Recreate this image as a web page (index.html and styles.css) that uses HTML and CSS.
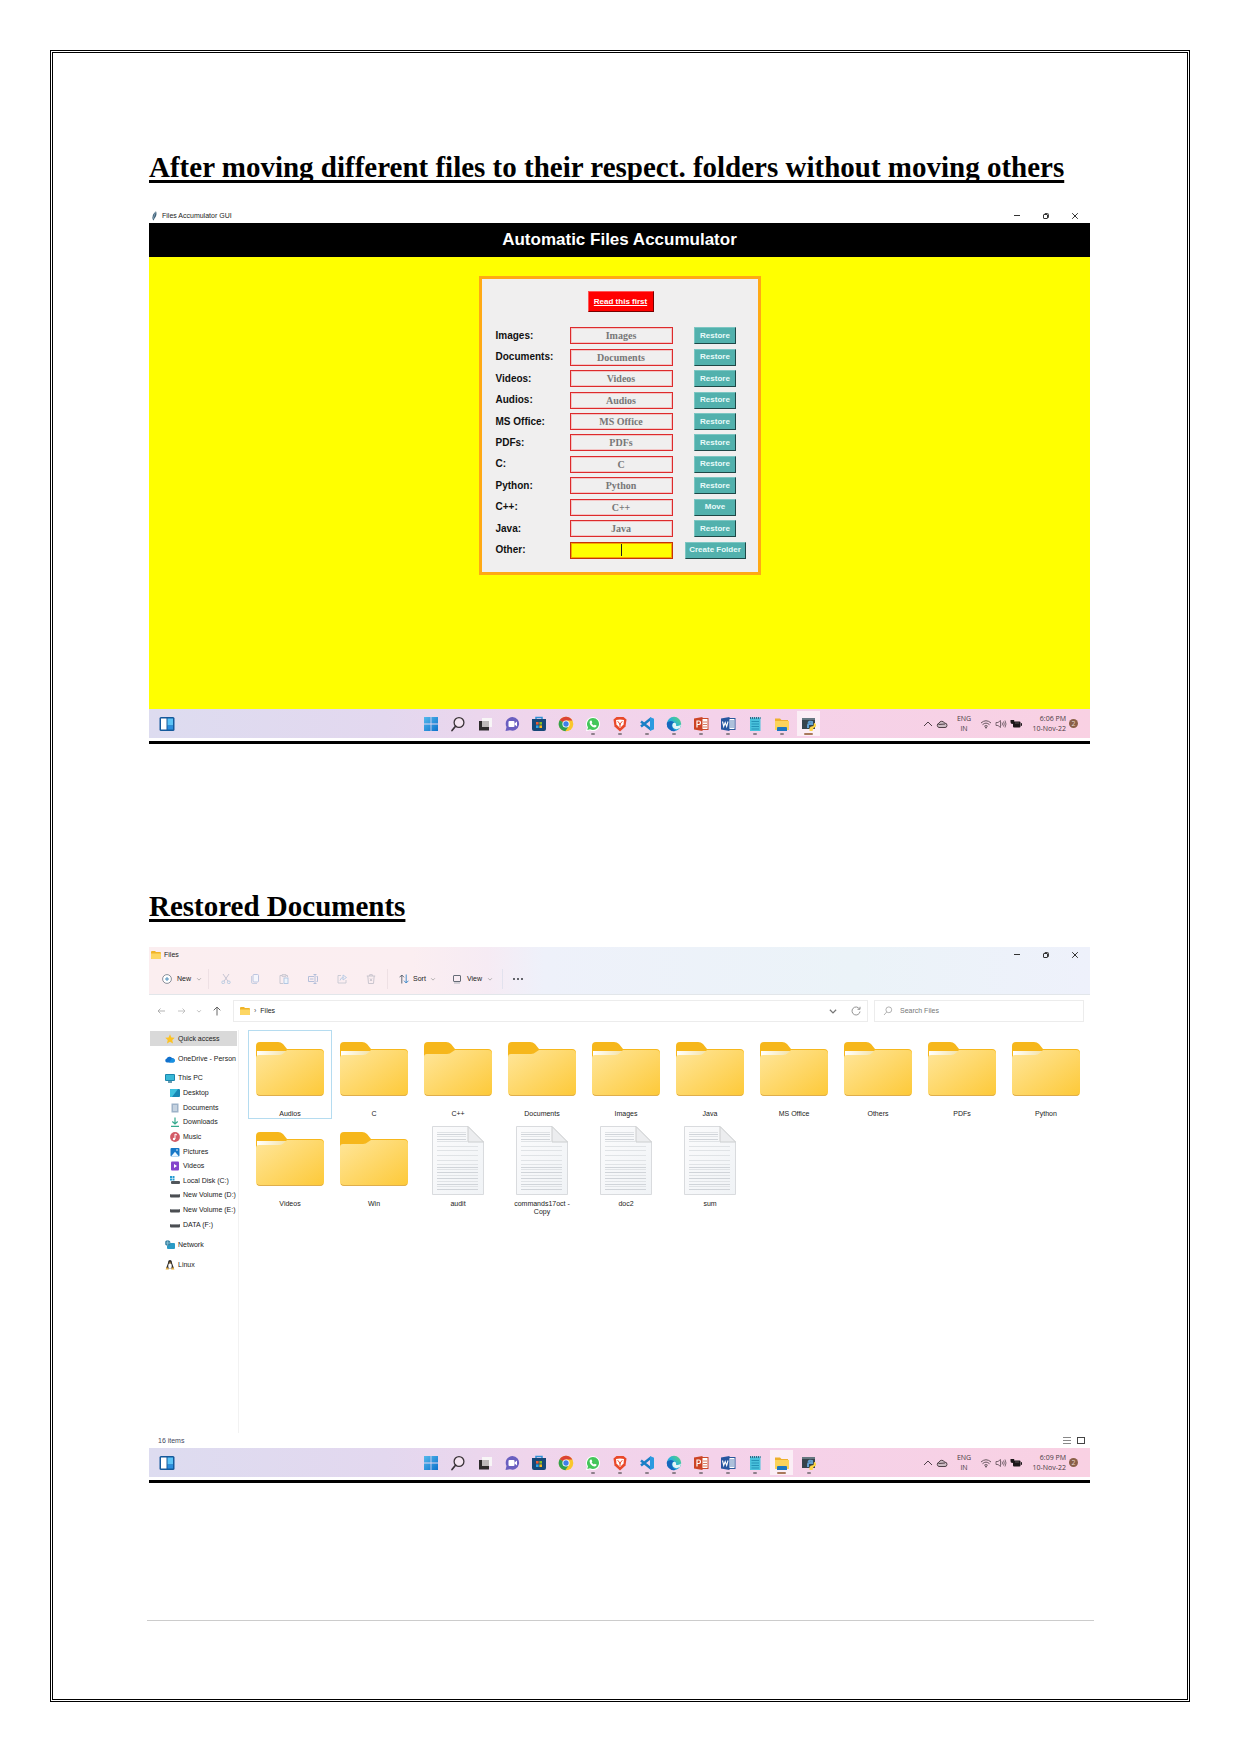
FILE: index.html
```html
<!DOCTYPE html>
<html lang="en">
<head>
<meta charset="utf-8">
<title>Files Accumulator</title>
<link rel="stylesheet" href="styles.css">
</head>
<body>
<svg class="defs" aria-hidden="true">
  <defs>
    <linearGradient id="gFolder" x1="0" y1="0" x2="1" y2="1"><stop offset="0" stop-color="#ffe69a"/><stop offset="1" stop-color="#fdc938"/></linearGradient>
    <linearGradient id="gPaper" x1="0" y1="0" x2="1" y2="0"><stop offset="0" stop-color="#fff"/><stop offset="1" stop-color="#f3e2a6"/></linearGradient>
    <linearGradient id="gWin" x1="0" y1="0" x2="1" y2="1"><stop offset="0" stop-color="#55b9ec"/><stop offset="1" stop-color="#0c72cc"/></linearGradient>
    <linearGradient id="gEdge" x1="0" y1="1" x2="1" y2="0"><stop offset="0" stop-color="#1377d2"/><stop offset=".5" stop-color="#28b1d8"/><stop offset="1" stop-color="#5fd870"/></linearGradient>
    <linearGradient id="gDoc" x1="0" y1="0" x2="1" y2="1"><stop offset="0" stop-color="#fbfbfc"/><stop offset="1" stop-color="#f0f3f6"/></linearGradient>
  </defs>
  <symbol id="folder-full" viewBox="0 0 68 54"><path d="M0 4Q0 0 4 0H22Q25 0 27 2L31 7H64Q68 7 68 11V30H0Z" fill="#f6b71c"/><path d="M1 9H31L28 14H1Z" fill="url(#gPaper)"/><path d="M0 16Q0 13 3 13H23Q26 13 28 11L31 8H64Q68 8 68 12V50Q68 54 64 54H4Q0 54 0 50Z" fill="url(#gFolder)"/><path d="M1 52Q2 53.500 4 53.500H64Q66 53.500 67 52" fill="none" stroke="#dfae4c"/></symbol>
  <symbol id="folder-empty" viewBox="0 0 68 54"><path d="M0 4Q0 0 4 0H22Q25 0 27 2L31 7H64Q68 7 68 11V30H0Z" fill="#f6b71c"/><path d="M0 15Q0 12 3 12H23Q26 12 28 10L31 8H64Q68 8 68 12V50Q68 54 64 54H4Q0 54 0 50Z" fill="url(#gFolder)"/><path d="M1 52Q2 53.500 4 53.500H64Q66 53.500 67 52" fill="none" stroke="#dfae4c"/></symbol>
  <symbol id="textfile" viewBox="0 0 52 69"><path d="M.5.5H36L51.500 16V68.500H.5Z" fill="url(#gDoc)" stroke="#d9dbde"/><path d="M5 6.500H34M5 10.500H34M5 15.500H35M5 20.500H46M5 24.500H46M5 29.500H46M5 34.500H46M5 38.500H46M5 43.500H46M5 49.500H46M5 55.500H46M5 60.500H46" stroke="#e0e3e6"/><path d="M5 8.500H34M5 13.500H34M5 41.500H46M5 46.500H46M5 52.500H46M5 58.500H46M5 63.500H46" stroke="#d0d4d9"/><path d="M36 .5V16H51.500Z" fill="#ecedef" stroke="#cccecf"/></symbol>
  <symbol id="folder-small" viewBox="0 0 10 8"><path d="M0 1Q0 0 1 0H4L5 1H9Q10 1 10 2V7Q10 8 9 8H1Q0 8 0 7Z" fill="#f0b429"/><path d="M0 2.500H10V7Q10 8 9 8H1Q0 8 0 7Z" fill="#fdd663"/></symbol>

  <symbol id="widgets" viewBox="0 0 16 16"><rect x=".5" y="1" width="15" height="14" rx="1.500" fill="#14599b"/><rect x="2" y="2.500" width="5.500" height="11" fill="#fff"/><rect x="8.500" y="2.500" width="5.500" height="7" fill="#5cc3f6"/><rect x="8.500" y="9.500" width="5.500" height="4" fill="#2b8ede"/></symbol>
  <symbol id="start" viewBox="0 0 16 16"><path d="M1 1H7.600V7.600H1ZM8.400 1H15V7.600H8.400ZM1 8.400H7.600V15H1ZM8.400 8.400H15V15H8.400Z" fill="url(#gWin)"/></symbol>
  <symbol id="search" viewBox="0 0 16 16"><circle cx="9" cy="6.500" r="4.900" fill="#f4e4f1" stroke="#3a3338" stroke-width="1.300"/><path d="M5.500 10.200 2 14.500" stroke="#3a3338" stroke-width="1.700" stroke-linecap="round"/></symbol>
  <symbol id="taskview" viewBox="0 0 16 16"><path d="M5 2H15V11H5Z" fill="#f8f6f7"/><path d="M2 5H12V14.500H2Z" fill="#2d2b2c"/><path d="M5 5H12V11H5Z" fill="#bdb9ba"/></symbol>
  <symbol id="chat" viewBox="0 0 16 16"><path d="M8.500 1A6.800 6.800 0 1 1 6 14.200L1.500 15 2.500 11A6.800 6.800 0 0 1 8.500 1Z" fill="#6a5fc0"/><rect x="4.500" y="5" width="6" height="6" rx="1" fill="#fff"/><path d="M10.500 7.500 13 5.500V10.500L10.500 8.500Z" fill="#fff"/></symbol>
  <symbol id="store" viewBox="0 0 16 16"><path d="M5 4V1.500H11V4" fill="none" stroke="#2f90d5" stroke-width="1.500"/><path d="M1 3H15V13Q15 15 13 15H3Q1 15 1 13Z" fill="#174878"/><path d="M5 6H7.600V8.600H5Z" fill="#ef5b34"/><path d="M8.400 6H11V8.600H8.400Z" fill="#86be29"/><path d="M5 9.400H7.600V12H5Z" fill="#2aa5e8"/><path d="M8.400 9.400H11V12H8.400Z" fill="#fdbc1a"/></symbol>
  <symbol id="chrome" viewBox="0 0 16 16"><circle cx="8" cy="8" r="7.300" fill="#fac62b"/><path d="M8 8 1.700 4.300A7.300 7.300 0 0 1 14.300 4.500H8Z" fill="#dc4335"/><path d="M8 8 1.700 4.300A7.300 7.300 0 0 0 7.300 15.300L11 9.800Z" fill="#2ea052"/><circle cx="8" cy="8" r="3.600" fill="#fff"/><circle cx="8" cy="8" r="2.700" fill="#3f7fe8"/></symbol>
  <symbol id="whatsapp" viewBox="0 0 16 16"><path d="M8 1A7 7 0 1 1 4.800 14.200L1 15.200 2 11.600A7 7 0 0 1 8 1Z" fill="#fff"/><path d="M8 2A6 6 0 1 1 5 13.200L2.300 14 3 11.300A6 6 0 0 1 8 2Z" fill="#44c65a"/><path d="M5.200 4.700 6.500 4.500 7.300 6.500 6.600 7.300Q7.300 8.800 8.900 9.500L9.700 8.700 11.600 9.600Q11.600 11.600 9.600 11.600 5.200 10.700 4.600 6.500 4.500 5.300 5.200 4.700Z" fill="#fff"/></symbol>
  <symbol id="brave" viewBox="0 0 16 16"><path d="M4.500 1H11.500L14.500 3.500 13.500 10.500 8 15.500 2.500 10.500 1.500 3.500Z" fill="#e9492a"/><path d="M4 4 8 3.500 12 4 11.500 8.500 8 12 4.500 8.500Z" fill="#fff"/><path d="M5.500 5.500 7 6.500 8 9 9 6.500 10.500 5.500M8 9V11" stroke="#e9492a" fill="none"/></symbol>
  <symbol id="vscode" viewBox="0 0 16 16"><path d="M12 2.500 2 10.500M12 13.500 2 5.500" stroke="#1a7fc6" stroke-width="2.500"/><path d="M11 1 15 2.700V13.300L11 15Z" fill="#2c9ae0"/></symbol>
  <symbol id="edge" viewBox="0 0 16 16"><circle cx="8" cy="8" r="7.200" fill="url(#gEdge)"/><path d="M15 8.500Q13 10.500 10 9.700 10.800 7.500 8.800 6.800 6.500 6.600 6.300 9.200 6.500 12.700 10.500 13.300L14 12Z" fill="#e5f5f6"/><path d="M1 6.500Q5 3.500 8.500 6.500 6 6.500 5.800 9.500 6 13 9.500 14.800L8 15.200A7.200 7.200 0 0 1 1 6.500Z" fill="#1668bd"/></symbol>
  <symbol id="powerpoint" viewBox="0 0 16 16"><rect x="8" y="2.500" width="7" height="11" fill="#fff" stroke="#c9492b"/><path d="M10 6H14M10 8.500H14M10 11H14" stroke="#d77a61"/><path d="M1 2.500 9.500 1V15L1 13.500Z" fill="#cd4425"/><path d="M4 11.500V5H6Q7.500 5 7.500 6.700T6 8.500H4" fill="none" stroke="#fff" stroke-width="1.200"/></symbol>
  <symbol id="word" viewBox="0 0 16 16"><rect x="8" y="2.500" width="7" height="11" fill="#fff" stroke="#2a579a"/><path d="M10 5H14M10 7H14M10 9H14M10 11H14" stroke="#5d81b6"/><path d="M1 2.500 9.500 1V15L1 13.500Z" fill="#2756a0"/><path d="M2.500 5.500 3.700 10.500 5.200 6.500 6.700 10.500 8 5.500" fill="none" stroke="#fff" stroke-width="1.100"/></symbol>
  <symbol id="notepad" viewBox="0 0 16 16"><rect x="3" y="1.500" width="10.500" height="13.500" fill="#49c1dc"/><path d="M3 2H13.500" stroke="#346985" stroke-width="1.800" stroke-dasharray="1 1"/><path d="M4.500 5.500H12M4.500 8H12M4.500 10.500H12M4.500 13H12" stroke="#2493b7"/></symbol>
  <symbol id="explorer" viewBox="0 0 16 16"><path d="M1 2.500H6L7.500 4H14V13H1Z" fill="#edb02c"/><path d="M1 5H15V14H1Z" fill="#fbd35a"/><path d="M4 11H12Q13 11 13 12V15H3V12Q3 11 4 11Z" fill="#1c77c0"/></symbol>
  <symbol id="python" viewBox="0 0 16 16"><path d="M1 2H14V13H1Z" fill="#36444c"/><path d="M1 2H14V4H1Z" fill="#657780"/><path d="M7 12V9Q7 8 8 8H11V6Q8 5 7.500 7" fill="none" stroke="#62a0d1" stroke-width="2"/><path d="M13 7Q15.500 7 15 10.500L12.500 12 11.500 15H8.500V12Q9 10.500 12.500 10Z" fill="#ffd646"/></symbol>

  <symbol id="chev-up" viewBox="0 0 10 10"><path d="M1 7 5 3 9 7" fill="none" stroke="#4f4048"/></symbol>
  <symbol id="cloud" viewBox="0 0 12 10"><path d="M3 8.500A2.200 2.200 0 0 1 3 4.200 3 3 0 0 1 8.500 4Q11.300 4.200 11 6.500T9 8.500Z" fill="#cdbcc4" stroke="#514048"/><path d="M2.500 5.500 9 5" stroke="#514048"/></symbol>
  <symbol id="wifi" viewBox="0 0 12 10"><path d="M1 4Q6-.5 11 4M2.500 5.700Q6 2.500 9.500 5.700M4.200 7.300Q6 5.700 7.800 7.300" fill="none" stroke="#66565e"/><circle cx="6" cy="8.500" r="1" fill="#66565e"/></symbol>
  <symbol id="sound" viewBox="0 0 12 10"><path d="M1 3.500H3L5.500 1.500V8.500L3 6.500H1ZM7 3.500Q8 5 7 6.500M8.500 2.500Q10 5 8.500 7.500M10 1.500Q12 5 10 8.500" fill="none" stroke="#604f58" stroke-width=".8"/></symbol>
  <symbol id="battery" viewBox="0 0 12 10"><rect x="3" y="2.500" width="7.500" height="6" rx="1" fill="#1c1719"/><rect x="10.800" y="4.200" width="1.200" height="2.600" fill="#1c1719"/><path d="M.5 1V3Q.5 5 2.300 5T4.200 3V1Z" fill="#1c1719"/><path d="M5 4H9" stroke="#85787e" stroke-width=".6"/></symbol>

  <symbol id="minimise" viewBox="0 0 8 8"><path d="M1 3.500H7" stroke="#333"/></symbol>
  <symbol id="restore" viewBox="0 0 8 8"><path d="M3 2.500V1.500H5.500Q6.500 1.500 6.500 2.500V5.500H5.500" fill="none" stroke="#444"/><rect x="1.500" y="2.500" width="4" height="4" rx=".5" fill="none" stroke="#333"/></symbol>
  <symbol id="close" viewBox="0 0 8 8"><path d="M1.200 1.200 6.800 6.800M6.800 1.200 1.200 6.800" stroke="#333"/></symbol>
  <symbol id="feather" viewBox="0 0 8 10"><path d="M2 9Q0 4 5 .3 6.500 4 3.500 7.500L2.500 9.500Z" fill="#3e6078"/><path d="M4.500 1 2 8" stroke="#9bb4c4" stroke-width=".7"/></symbol>

  <symbol id="new" viewBox="0 0 10 10"><circle cx="5" cy="5" r="4.400" fill="#fff" stroke="#6d7683" stroke-width=".8"/><path d="M5 3V7M3 5H7" stroke="#3f86b8" stroke-width=".9"/></symbol>
  <symbol id="chev-down" viewBox="0 0 8 8"><path d="M1.500 3 4 5.500 6.500 3" fill="none" stroke="currentColor"/></symbol>
  <symbol id="cut" viewBox="0 0 10 10"><path d="M2 0 7 7.300M8 0 3 7.300" stroke="#bfc0cf" stroke-width=".9"/><circle cx="2.200" cy="8.300" r="1.400" fill="none" stroke="#b3c8e0" stroke-width=".9"/><circle cx="7.800" cy="8.300" r="1.400" fill="none" stroke="#b3c8e0" stroke-width=".9"/></symbol>
  <symbol id="copy" viewBox="0 0 10 10"><rect x="3" y=".5" width="5.500" height="7.500" rx="1" fill="#f6f6fc" stroke="#b5bfdc" stroke-width=".9"/><path d="M1.500 2V8Q1.500 9.500 3 9.500H7" fill="none" stroke="#c2cbe0" stroke-width=".9"/></symbol>
  <symbol id="paste" viewBox="0 0 10 10"><path d="M3 1.500H1V9.500H4M7 1.500H8.500V3M3 .7H7V2.300H3Z" fill="none" stroke="#c3c2cd" stroke-width=".9"/><rect x="5" y="4" width="4" height="5.500" fill="#eef4fb" stroke="#adc4e0" stroke-width=".9"/></symbol>
  <symbol id="rename" viewBox="0 0 10 10"><path d="M6 2.500H.5V7.500H6M8.500 2.500H9.500V7.500H8.500M2 5H5.500" fill="none" stroke="#adb9d7" stroke-width=".9"/><path d="M5.500.5H8.500M7 .5V9.500M5.500 9.500H8.500" stroke="#adb9d7" stroke-width=".9"/></symbol>
  <symbol id="share" viewBox="0 0 10 10"><path d="M4 1.500H1V9H9V6" fill="none" stroke="#c6c7d3" stroke-width=".9"/><path d="M3 6.500Q3.500 3.500 6.500 3.500M6 1 9.500 3.500 6 6Z" fill="none" stroke="#b3c8e4" stroke-width=".9"/></symbol>
  <symbol id="trash" viewBox="0 0 10 10"><path d="M.8 2H9.200M3.700 2V.7H6.300V2M1.800 2 2.500 9.500H7.500L8.200 2M4 4.500 6 7M6 4.500 4 7" fill="none" stroke="#c4c1cb" stroke-width=".9"/></symbol>
  <symbol id="sort" viewBox="0 0 10 10"><path d="M2.800 9.500V1M.5 3.300 2.800 1 5 3.300" fill="none" stroke="#555e6a" stroke-width=".9"/><path d="M7.200.5V9M5 6.700 7.200 9 9.500 6.700" fill="none" stroke="#3785c6" stroke-width=".9"/></symbol>
  <symbol id="view" viewBox="0 0 10 10"><rect x="1.500" y="1.500" width="7" height="6" rx=".5" fill="none" stroke="#666c77"/><path d="M2 9H8" stroke="#b0b3bb"/></symbol>
  <symbol id="dots" viewBox="0 0 12 4"><circle cx="2" cy="2" r="1" fill="#33363d"/><circle cx="6" cy="2" r="1" fill="#33363d"/><circle cx="10" cy="2" r="1" fill="#33363d"/></symbol>
  <symbol id="left" viewBox="0 0 10 10"><path d="M9 5H2M4.500 2.500 2 5 4.500 7.500" fill="none" stroke="#aaa" stroke-width=".9"/></symbol>
  <symbol id="right" viewBox="0 0 10 10"><path d="M1 5H8M5.500 2.500 8 5 5.500 7.500" fill="none" stroke="#bbb" stroke-width=".9"/></symbol>
  <symbol id="up" viewBox="0 0 10 10"><path d="M5 9.500V1M1.700 4.300 5 1 8.300 4.300" fill="none" stroke="#666"/></symbol>
  <symbol id="reload" viewBox="0 0 10 10"><path d="M8.500 3A4 4 0 1 0 9 5.500M9 .8V3.300H6.500" fill="none" stroke="#888" stroke-width=".9"/></symbol>
  <symbol id="glass" viewBox="0 0 10 10"><circle cx="5.800" cy="3.800" r="2.900" fill="none" stroke="#aaa" stroke-width=".9"/><path d="M3.700 6 1 9" stroke="#aaa" stroke-width=".9"/></symbol>

  <symbol id="star" viewBox="0 0 10 10"><path d="M5 .3 6.400 3.400 9.800 3.700 7.300 6 8 9.500 5 7.700 2 9.500 2.700 6 .2 3.700 3.600 3.400Z" fill="#fcc224"/></symbol>
  <symbol id="onedrive" viewBox="0 0 10 10"><path d="M2 8.500A2 2 0 0 1 1.700 4.600 3 3 0 0 1 7 4Q9.800 4.300 9.800 6.500T8 8.500Z" fill="#1271cc"/><path d="M4 8.500 7 4.500Q9.800 4.500 9.800 6.500T8 8.500Z" fill="#1791e2"/></symbol>
  <symbol id="pc" viewBox="0 0 10 10"><rect x="0" y="1" width="10" height="7" rx="1" fill="#1b86ae"/><rect x="1" y="2" width="8" height="5" fill="#39b8d6"/><path d="M3 9H7" stroke="#377c98" stroke-width="1.500"/></symbol>
  <symbol id="desktop" viewBox="0 0 10 10"><rect y="1" width="10" height="8" rx="1" fill="#1787b4"/><path d="M0 2Q0 1 1 1H8L2 9H1Q0 9 0 8Z" fill="#3dc1de"/></symbol>
  <symbol id="documents" viewBox="0 0 10 10"><rect x="1.500" y=".5" width="7" height="9" fill="#9db2c8"/><path d="M3 3H7M3 5H7M3 7H7" stroke="#eef3f8"/></symbol>
  <symbol id="downloads" viewBox="0 0 10 10"><path d="M5 .5V7M2.300 4.500 5 7 7.700 4.500M1 9.300H9" fill="none" stroke="#35a98d" stroke-width="1.200"/></symbol>
  <symbol id="music" viewBox="0 0 10 10"><circle cx="5" cy="5" r="4.900" fill="#d35b66"/><path d="M5 7V2L7 3" fill="none" stroke="#fff"/><circle cx="4" cy="7" r="1.200" fill="#fff"/></symbol>
  <symbol id="pictures" viewBox="0 0 10 10"><rect x=".5" y="1" width="9" height="8.500" rx="1" fill="#1677c7"/><path d="M1 9.500 5 4.800 9 9.500Z" fill="#e8f5ff"/><circle cx="7" cy="3" r=".8" fill="#fff"/></symbol>
  <symbol id="videos" viewBox="0 0 10 10"><rect x="1" y=".5" width="8" height="9" rx="1" fill="#8444cb"/><path d="M4 3V7L7 5Z" fill="#fff"/></symbol>
  <symbol id="sysdisk" viewBox="0 0 10 10"><path d="M0 0H2V2H0ZM2.500 0H4.500V2H2.500ZM0 2.500H2V4.500H0ZM2.500 2.500H4.500V4.500H2.500Z" fill="#259bd2"/><rect x="1" y="5" width="9" height="3" rx="1" fill="#51565b"/></symbol>
  <symbol id="disk" viewBox="0 0 10 10"><rect y="4" width="10" height="3.500" rx="1" fill="#4b4e52"/><path d="M1 4.500H9" stroke="#94979b"/></symbol>
  <symbol id="network" viewBox="0 0 10 10"><rect x="2" y="3" width="8" height="6" rx="1" fill="#2b9bc6"/><circle cx="2.700" cy="3" r="2.700" fill="#397f9f"/><path d="M0 3H5.300M2.700.3V5.700" stroke="#a9dced" stroke-width=".6"/></symbol>
  <symbol id="linux" viewBox="0 0 10 10"><path d="M5 0Q7 0 7 3L9 8.500H1L3 3Q3 0 5 0Z" fill="#34302d"/><ellipse cx="5" cy="6" rx="1.800" ry="2.700" fill="#fff"/><path d="M.5 9.500 2 7 4 9.500ZM9.500 9.500 8 7 6 9.500ZM4 2.500H6L5 3.700Z" fill="#e7ac36"/></symbol>
  <symbol id="list" viewBox="0 0 8 8"><path d="M0 .5H8M0 3.500H8M0 6.500H8" stroke="#888"/></symbol>
  <symbol id="tiles" viewBox="0 0 8 8"><rect x=".5" y=".5" width="7" height="6" fill="#fff" stroke="#444"/></symbol>
</svg>

<main class="sheet">
  <section class="shot">
    <h2 class="heading">After moving different files to their respect. folders without moving others</h2>
    <div class="screen">
      <header class="titlebar">
        <svg class="feather"><use href="#feather"/></svg>
        <span class="titlebar-name">Files Accumulator GUI</span>
        <div class="controls"><button aria-label="Minimise"><svg><use href="#minimise"/></svg></button><button aria-label="Restore down"><svg><use href="#restore"/></svg></button><button aria-label="Close"><svg><use href="#close"/></svg></button></div>
      </header>
      <h1 class="banner">Automatic Files Accumulator</h1>
      <div class="canvas">
        <form class="panel">
          <button type="button" class="btn btn-read">Read this first</button>
          <div class="rows">
            <label for="f1">Images:</label><input id="f1" value="Images"><button type="button" class="btn">Restore</button>
            <label for="f2">Documents:</label><input id="f2" value="Documents"><button type="button" class="btn">Restore</button>
            <label for="f3">Videos:</label><input id="f3" value="Videos"><button type="button" class="btn">Restore</button>
            <label for="f4">Audios:</label><input id="f4" value="Audios"><button type="button" class="btn">Restore</button>
            <label for="f5">MS Office:</label><input id="f5" value="MS Office"><button type="button" class="btn">Restore</button>
            <label for="f6">PDFs:</label><input id="f6" value="PDFs"><button type="button" class="btn">Restore</button>
            <label for="f7">C:</label><input id="f7" value="C"><button type="button" class="btn">Restore</button>
            <label for="f8">Python:</label><input id="f8" value="Python"><button type="button" class="btn">Restore</button>
            <label for="f9">C++:</label><input id="f9" value="C++"><button type="button" class="btn">Move</button>
            <label for="f10">Java:</label><input id="f10" value="Java"><button type="button" class="btn">Restore</button>
            <label for="f11">Other:</label><input id="f11" class="active"><button type="button" class="btn btn-create">Create Folder</button>
          </div>
        </form>
      </div>
      <footer class="taskbar">
        <div class="task-left"><svg><use href="#widgets"/></svg></div>
        <nav class="apps" aria-label="Taskbar">
          <span><svg><use href="#start"/></svg></span><span><svg><use href="#search"/></svg></span><span><svg><use href="#taskview"/></svg></span><span><svg><use href="#chat"/></svg></span><span><svg><use href="#store"/></svg></span><span><svg><use href="#chrome"/></svg></span><span class="open"><svg><use href="#whatsapp"/></svg></span><span class="open"><svg><use href="#brave"/></svg></span><span class="open"><svg><use href="#vscode"/></svg></span><span class="open"><svg><use href="#edge"/></svg></span><span class="open"><svg><use href="#powerpoint"/></svg></span><span class="open"><svg><use href="#word"/></svg></span><span class="open"><svg><use href="#notepad"/></svg></span><span class="open"><svg><use href="#explorer"/></svg></span><span class="open current"><svg><use href="#python"/></svg></span>
        </nav>
        <div class="tray"><svg class="tray-chev"><use href="#chev-up"/></svg><svg><use href="#cloud"/></svg><span class="lang">ENG<br>IN</span><svg><use href="#wifi"/></svg><svg><use href="#sound"/></svg><svg><use href="#battery"/></svg><span class="clock">6:06 PM<br>10-Nov-22</span><span class="count">2</span></div>
      </footer>
    </div>
  </section>

  <section class="shot">
    <h2 class="heading">Restored Documents</h2>
    <div class="screen">
      <div class="chrome">
        <header class="titlebar titlebar-files">
          <svg class="mini"><use href="#folder-small"/></svg>
          <span class="titlebar-name">Files</span>
          <div class="controls"><button aria-label="Minimise"><svg><use href="#minimise"/></svg></button><button aria-label="Restore down"><svg><use href="#restore"/></svg></button><button aria-label="Close"><svg><use href="#close"/></svg></button></div>
        </header>
        <div class="toolbar">
          <button class="tool tool-new"><svg><use href="#new"/></svg>New<svg class="chev"><use href="#chev-down"/></svg></button>
          <div class="edit">
            <button aria-label="Cut"><svg><use href="#cut"/></svg></button><button aria-label="Copy"><svg><use href="#copy"/></svg></button><button aria-label="Paste"><svg><use href="#paste"/></svg></button><button aria-label="Rename"><svg><use href="#rename"/></svg></button><button aria-label="Share"><svg><use href="#share"/></svg></button><button aria-label="Delete"><svg><use href="#trash"/></svg></button>
          </div>
          <button class="tool tool-sort"><svg><use href="#sort"/></svg>Sort<svg class="chev"><use href="#chev-down"/></svg></button>
          <button class="tool tool-view"><svg><use href="#view"/></svg>View<svg class="chev"><use href="#chev-down"/></svg></button>
          <button class="more" aria-label="More"><svg><use href="#dots"/></svg></button>
        </div>
      </div>
      <div class="navbar">
        <div class="history"><button aria-label="Back"><svg><use href="#left"/></svg></button><button aria-label="Forward"><svg><use href="#right"/></svg></button><button aria-label="Recent" class="recent"><svg><use href="#chev-down"/></svg></button><button aria-label="Up"><svg><use href="#up"/></svg></button></div>
        <div class="address"><svg class="mini"><use href="#folder-small"/></svg><span class="crumb">›</span><span>Files</span><span class="address-end"><svg><use href="#chev-down"/></svg><svg><use href="#reload"/></svg></span></div>
        <label class="find"><svg><use href="#glass"/></svg><input type="search" placeholder="Search Files" aria-label="Search Files"></label>
      </div>
      <div class="browser">
        <nav class="side" aria-label="Folders">
          <a href="#" class="selected"><svg><use href="#star"/></svg>Quick access</a>
          <a href="#"><svg><use href="#onedrive"/></svg>OneDrive - Person</a>
          <div class="tree">
            <a href="#"><svg><use href="#pc"/></svg>This PC</a>
            <a href="#" class="sub"><svg><use href="#desktop"/></svg>Desktop</a>
            <a href="#" class="sub"><svg><use href="#documents"/></svg>Documents</a>
            <a href="#" class="sub"><svg><use href="#downloads"/></svg>Downloads</a>
            <a href="#" class="sub"><svg><use href="#music"/></svg>Music</a>
            <a href="#" class="sub"><svg><use href="#pictures"/></svg>Pictures</a>
            <a href="#" class="sub"><svg><use href="#videos"/></svg>Videos</a>
            <a href="#" class="sub"><svg><use href="#sysdisk"/></svg>Local Disk (C:)</a>
            <a href="#" class="sub"><svg><use href="#disk"/></svg>New Volume (D:)</a>
            <a href="#" class="sub"><svg><use href="#disk"/></svg>New Volume (E:)</a>
            <a href="#" class="sub"><svg><use href="#disk"/></svg>DATA (F:)</a>
          </div>
          <a href="#"><svg><use href="#network"/></svg>Network</a>
          <a href="#"><svg><use href="#linux"/></svg>Linux</a>
        </nav>
        <ul class="files">
          <li class="picked"><svg class="dir"><use href="#folder-full"/></svg><span>Audios</span></li>
          <li><svg class="dir"><use href="#folder-full"/></svg><span>C</span></li>
          <li><svg class="dir"><use href="#folder-empty"/></svg><span>C++</span></li>
          <li><svg class="dir"><use href="#folder-empty"/></svg><span>Documents</span></li>
          <li><svg class="dir"><use href="#folder-full"/></svg><span>Images</span></li>
          <li><svg class="dir"><use href="#folder-full"/></svg><span>Java</span></li>
          <li><svg class="dir"><use href="#folder-full"/></svg><span>MS Office</span></li>
          <li><svg class="dir"><use href="#folder-full"/></svg><span>Others</span></li>
          <li><svg class="dir"><use href="#folder-full"/></svg><span>PDFs</span></li>
          <li><svg class="dir"><use href="#folder-full"/></svg><span>Python</span></li>
          <li><svg class="dir"><use href="#folder-full"/></svg><span>Videos</span></li>
          <li><svg class="dir"><use href="#folder-empty"/></svg><span>Win</span></li>
          <li><svg class="doc"><use href="#textfile"/></svg><span>audit</span></li>
          <li><svg class="doc"><use href="#textfile"/></svg><span>commands17oct - Copy</span></li>
          <li><svg class="doc"><use href="#textfile"/></svg><span>doc2</span></li>
          <li><svg class="doc"><use href="#textfile"/></svg><span>sum</span></li>
        </ul>
      </div>
      <div class="status"><span>16 items</span><span class="modes"><svg><use href="#list"/></svg><svg><use href="#tiles"/></svg></span></div>
      <footer class="taskbar">
        <div class="task-left"><svg><use href="#widgets"/></svg></div>
        <nav class="apps" aria-label="Taskbar">
          <span><svg><use href="#start"/></svg></span><span><svg><use href="#search"/></svg></span><span><svg><use href="#taskview"/></svg></span><span><svg><use href="#chat"/></svg></span><span><svg><use href="#store"/></svg></span><span><svg><use href="#chrome"/></svg></span><span class="open"><svg><use href="#whatsapp"/></svg></span><span class="open"><svg><use href="#brave"/></svg></span><span class="open"><svg><use href="#vscode"/></svg></span><span class="open"><svg><use href="#edge"/></svg></span><span class="open"><svg><use href="#powerpoint"/></svg></span><span class="open"><svg><use href="#word"/></svg></span><span class="open"><svg><use href="#notepad"/></svg></span><span class="open current"><svg><use href="#explorer"/></svg></span><span class="open"><svg><use href="#python"/></svg></span>
        </nav>
        <div class="tray"><svg class="tray-chev"><use href="#chev-up"/></svg><svg><use href="#cloud"/></svg><span class="lang">ENG<br>IN</span><svg><use href="#wifi"/></svg><svg><use href="#sound"/></svg><svg><use href="#battery"/></svg><span class="clock">6:09 PM<br>10-Nov-22</span><span class="count">2</span></div>
      </footer>
    </div>
  </section>
  <hr class="rule">
</main>
</body>
</html>
```
FILE: styles.css
```css
* { box-sizing: border-box; }
body { margin: 0; padding: 50px; background: #fff; color: #000; font-family: "Liberation Sans", Arial, sans-serif; }
.defs { position: absolute; width: 0; height: 0; }
svg { display: block; flex: none; }
button { margin: 0; padding: 0; border: 0; background: none; font: inherit; color: inherit; }

.sheet { min-height: calc(100vh - 100px); padding: 97px 97px 0 96px; border: 3px double #000; }
.shot { margin-bottom: 145px; }
.heading { margin: 0 0 24px; font: bold 29px/34px "Liberation Serif", "Times New Roman", serif; text-decoration: underline; text-decoration-thickness: 3px; text-underline-offset: 3px; text-decoration-skip-ink: none; }
.screen { padding-bottom: 3px; border-bottom: 3px solid #000; font-size: 7px; line-height: 8px; color: #222; }

/* window title bars */
.titlebar { display: flex; align-items: center; height: 15px; padding: 0 1px 0 2px; gap: 3px; }
.titlebar-files { height: 16px; }
.feather { width: 8px; height: 10px; }
.mini { width: 10px; height: 8px; }
.controls { display: flex; margin-left: auto; }
.controls button { display: flex; justify-content: center; width: 29px; }
.controls svg { width: 8px; height: 8px; }

/* accumulator window */
.banner { margin: 0; background: #000; color: #fff; font-size: 17px; line-height: 34px; text-align: center; }
.canvas { display: flex; justify-content: center; padding: 19px 0 134px; background: #ff0; }
.panel { width: 282px; padding: 12px 12px 11px 14px; border: 3px solid #ffa914; background: #f0efef; }
.btn { justify-self: center; width: 42px; height: 17px; border: 1px solid; border-color: #7cc6c2 #1e4746 #1e4746 #7cc6c2; background: #52b1ad; color: #e8fbfa; font-weight: bold; font-size: 8px; line-height: 14px; white-space: nowrap; }
.btn-create { width: 61px; }
.btn-read { display: block; width: 66px; height: 21px; margin: 0 auto 13px; border-color: #f55 #700 #700 #f55; background: #f00; color: #fff; text-decoration: underline; }
.rows { display: grid; grid-template-columns: 62px 103px 61px; grid-auto-rows: 1fr; column-gap: 12px; align-items: center; height: 236px; }
.rows label { font-weight: bold; font-size: 10px; line-height: 12px; color: #111; }
.rows input { width: 100%; height: 17px; padding: 0; border: 1px solid #dd2a2c; border-radius: 0; outline: 0; background: #f0efef; box-shadow: inset 0 0 0 1px #f3c4c4; color: #777; font: bold 10px/14px "Liberation Serif", "Times New Roman", serif; text-align: center; }
.rows .active { border-color: #c8320a; background: linear-gradient(#222, #222) center / 1px 12px no-repeat #ff0; box-shadow: inset 0 0 0 1px #f2a800; }

/* taskbar */
.taskbar { display: grid; grid-template-columns: 1fr auto 1fr; align-items: center; height: 29px; background: linear-gradient(90deg, #dddcf0, #e3d8ef 25%, #efd5ec 40%, #f4d2ea 60%, #f9d1e3); }
.task-left { padding-left: 10px; }
.task-left svg, .apps svg { width: 16px; height: 16px; }
.apps { display: flex; }
.apps span { display: flex; justify-content: center; align-items: center; position: relative; width: 27px; height: 25px; }
.apps .open::after { content: ""; position: absolute; left: 12px; bottom: 1px; width: 4px; height: 2px; border-radius: 1px; background: #8d7f8a; }
.apps .current { background: #fbeef6; background-clip: content-box; padding: 0 2px; border-radius: 2px; }
.apps .current::after { left: 9px; width: 9px; background: #a8795c; }
.tray { display: flex; justify-content: flex-end; align-items: center; gap: 3px; padding-right: 12px; color: #483a42; font: 7px/10px "Open Sans", sans-serif; }
.tray svg { width: 12px; height: 10px; }
.tray .tray-chev { width: 10px; }
.lang { width: 26px; text-align: center; }
.clock { width: 41px; text-align: right; }
.count { width: 9px; height: 9px; border-radius: 50%; background: #8a6048; color: #e8d5ca; line-height: 9px; text-align: center; }

/* file explorer */
.chrome { border-bottom: 1px solid #e2e6ea; background: linear-gradient(90deg, #fbeef0, #fbeef1 28%, #f6ebf4 36%, #eef1fa 42%, #ebf3f8 75%, #eef1fb); }
.toolbar { display: flex; align-items: center; height: 31px; }
.toolbar svg { width: 10px; height: 10px; }
.toolbar .chev { width: 6px; height: 6px; color: #999; }
.tool { display: flex; align-items: center; gap: 5px; height: 20px; }
.tool-new { width: 60px; padding-left: 13px; border-right: 1px solid #eee0e4; }
.edit { display: flex; height: 20px; padding: 0 2px; border-right: 1px solid #eee0e4; }
.edit button { display: flex; justify-content: center; align-items: center; width: 29px; }
.tool-sort { width: 53px; margin-left: 11px; gap: 4px; }
.tool-view { width: 51px; border-right: 1px solid #e2e2ee; }
.more { width: 29px; display: flex; justify-content: center; }
.more svg { width: 12px; height: 4px; }
.navbar { display: flex; gap: 6px; padding: 5px 6px 8px 0; }
.history { display: flex; align-items: center; width: 78px; padding-left: 2px; }
.history button { display: flex; justify-content: center; width: 22px; }
.history .recent { width: 16px; color: #aaa; }
.history svg { width: 10px; height: 10px; }
.history .recent svg { width: 6px; height: 6px; }
.address { display: flex; flex: 1; align-items: center; gap: 4px; height: 22px; padding: 0 6px; border: 1px solid #ececec; }
.crumb { color: #555; }
.address-end { display: flex; align-items: center; gap: 13px; margin-left: auto; color: #777; }
.address-end svg { width: 10px; height: 10px; }
.find { display: flex; align-items: center; gap: 5px; width: 210px; height: 22px; padding: 0 8px; border: 1px solid #ececec; }
.find svg { width: 10px; height: 10px; }
.find input { flex: 1; min-width: 0; padding: 0 2px; border: 0; background: none; font: inherit; }
.find input::placeholder { color: #777; }
.browser { display: flex; min-height: 403px; }
.side { display: flex; flex: none; flex-direction: column; gap: 5px; width: 90px; padding: 1px 1px 0; border-right: 1px solid #f2f2f2; }
.side a { display: flex; align-items: center; gap: 3px; height: 15px; padding-left: 15px; color: #222; text-decoration: none; white-space: nowrap; }
.side svg { width: 10px; height: 10px; }
.side .selected { background: #d9d9d9; }
.tree { display: flex; flex-direction: column; height: 161px; }
.tree a { flex: 1; }
.tree .sub { padding-left: 20px; }
.files { display: grid; flex: 1; grid-template-columns: repeat(auto-fill, 84px); grid-auto-rows: 90px; margin: 0; padding: 0 0 0 9px; list-style: none; }
.files li { display: grid; grid-template-rows: 79px auto; justify-items: center; align-items: center; align-content: start; height: 89px; border: 1px solid transparent; text-align: center; }
.files .picked { border-color: #b5dcf0; }
.files span { width: 62px; }
.dir { width: 68px; height: 54px; margin-bottom: 4px; }
.doc { width: 52px; height: 69px; }
.status { display: flex; justify-content: space-between; align-items: center; height: 15px; padding: 0 5px 0 9px; color: #3f4760; }
.modes { display: flex; gap: 6px; }
.modes svg { width: 8px; height: 8px; }
.rule { height: 1px; margin: -8px -4px 0 -2px; border: 0; background: #ccc; }
```
